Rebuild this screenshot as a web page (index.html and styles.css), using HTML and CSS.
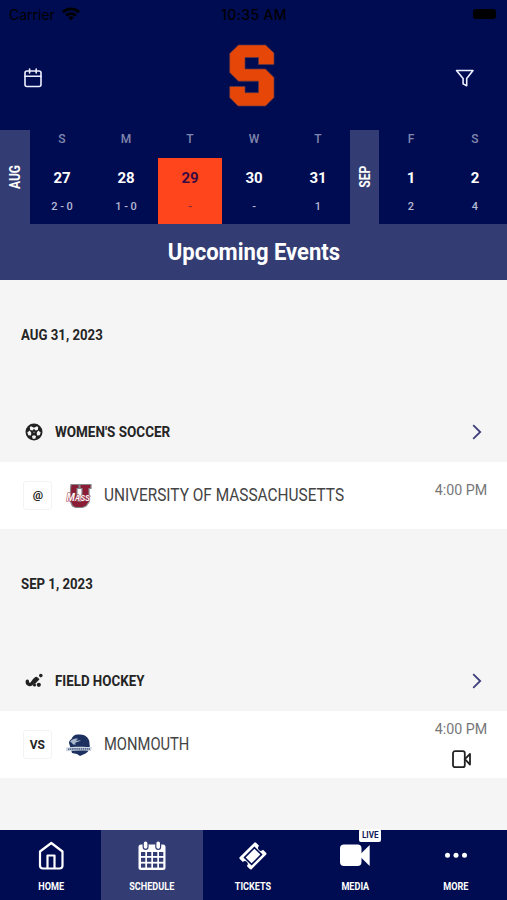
FILE: index.html
```html
<!DOCTYPE html>
<html lang="en">
<head>
<meta charset="utf-8">
<title>Upcoming Events</title>
<link rel="stylesheet" href="styles.css">
</head>
<body>
<div class="app">
  <header class="top">
    <div class="status">
      <div class="carrier"><span>Carrier</span>
        <svg width="18" height="14" viewBox="0 0 18 14"><g fill="none" stroke="#000" stroke-width="2.6"><path d="M1 5.2a11.4 11.4 0 0 1 16 0"/><path d="M4 8.6a7.2 7.2 0 0 1 10 0"/></g><path d="M9 13.6 6.2 10.6a4 4 0 0 1 5.6 0z"/></svg>
      </div>
      <div class="clock">10:35 AM</div>
      <div class="battery"><i></i></div>
    </div>
    <div class="brand">
      <svg class="cal" width="18" height="20" viewBox="0 0 18 20" fill="none" stroke="#eef0ff" stroke-width="1.6" stroke-linecap="round"><rect x="1" y="3" width="16" height="15.5" rx="2"/><path d="M1 8.2h16M5.6 1v4M12.2 1v4"/></svg>
      <svg class="logo" width="46" height="63" viewBox="0 0 46 63"><path fill="#e64608" stroke="#5c3a42" stroke-width=".7" d="M9.500 1h27l8.500 8v11.500H29.500V13.500H16V25h20.500l8.500 8.500v20L36.500 62H9L.7 53.500V42.500H16v6.200h13.500V37.200h-20L.7 28.500V9.500z"/></svg>
      <svg class="filter" width="20" height="20" viewBox="0 0 20 20" fill="none" stroke="#eef0ff" stroke-width="1.6" stroke-linejoin="round"><path d="M1.500 2.500h16.500l-6.300 8v7.200l-3.600-1.800v-5.400z"/></svg>
    </div>
    <div class="week">
      <div class="month aug"><span>AUG</span></div>
      <div class="day"><b>S</b><strong>27</strong><em>2 - 0</em></div>
      <div class="day"><b>M</b><strong>28</strong><em>1 - 0</em></div>
      <div class="day today"><b>T</b><strong>29</strong><em>-</em></div>
      <div class="day"><b>W</b><strong>30</strong><em>-</em></div>
      <div class="day"><b>T</b><strong>31</strong><em>1</em></div>
      <div class="month"><span>SEP</span></div>
      <div class="day"><b>F</b><strong>1</strong><em>2</em></div>
      <div class="day"><b>S</b><strong>2</strong><em>4</em></div>
    </div>
  </header>
  <h1><span>Upcoming Events</span></h1>
  <main>
    <h2><span>AUG 31, 2023</span></h2>
    <div class="sport">
      <svg width="18" height="18" viewBox="0 0 18 18"><circle cx="9" cy="9" r="8.500" fill="#222"/><g fill="#f5f5f5"><path d="m6 3.300 3 1.500 3-1.500 1.200 1-.4 2.600-2.300.5L9 5.700 7.500 7.400l-2.300-.5-.4-2.600z"/><path d="m2.300 9.500 2.500-2 1.500 2.200-.3 2.800-2.700-.2zM15.700 9.500l-2.500-2-1.500 2.200.3 2.800 2.700-.2zM7 13l2-.8 2 .8-.6 2.700H7.600z"/></g><circle cx="9" cy="9.200" r=".8" fill="#999"/></svg>
      <h3><span>WOMEN'S SOCCER</span></h3>
      <svg class="chev" width="10" height="16" viewBox="0 0 10 16"><path d="m1.200 1.200 7 6.800-7 6.800"/></svg>
    </div>
    <div class="game">
      <div class="where at"><span>@</span></div>
      <svg class="team" width="28" height="26" viewBox="0 0 28 26"><path d="M6 1.500h8v4h-2V16c0 2 1 2.500 2.500 2.500S17 18 17 16V5.500h-2v-4h11v4h-2V19l-3 4-3.500 1.500h-7L7.500 23 5.500 18.500v-13z" fill="#8a1c35" stroke="#85878a" stroke-width="1.200"/><text x="1.500" y="17.500" textLength="23.500" lengthAdjust="spacingAndGlyphs" class="mass"><tspan class="big">M</tspan>ASS</text></svg>
      <div class="name"><span>UNIVERSITY OF MASSACHUSETTS</span></div>
      <div class="info"><time>4:00 PM</time></div>
    </div>
    <h2><span>SEP 1, 2023</span></h2>
    <div class="sport">
      <svg width="18" height="18" viewBox="0 0 18 18"><path d="M2.300 9.300c-.3 3 3.400 4.500 5.200 1.400.9-1.600 2-3 3.800-4.200" fill="none" stroke="#222" stroke-width="3.400" stroke-linecap="round"/><path d="m9 11.500 4.800-5" stroke="#222" stroke-width="2"/><g fill="#222"><circle cx="15.800" cy="3.600" r="1.800"/><circle cx="9.500" cy="13" r="1.600"/><circle cx="13.800" cy="12.800" r="2.100"/></g></svg>
      <h3 class="fh"><span>FIELD HOCKEY</span></h3>
      <svg class="chev" width="10" height="16" viewBox="0 0 10 16"><path d="m1.200 1.200 7 6.800-7 6.800"/></svg>
    </div>
    <div class="game">
      <div class="where"><span>VS</span></div>
      <svg class="team" width="28" height="26" viewBox="0 0 28 26"><path d="M4 11c0-2 1-3 2.500-4C8 3.500 10 2 14 2.500 21 2 25 7 24.500 12c1 4-1 8-4 9.500L15 24l-3-2-5-1z" fill="#1c315f"/><path d="M5 9.500c2-2.500 5-3 8-3l-2 2.500 5-1c-3 2.500-5 2-6 3l1 1.500H8l-1-1.500z" fill="#a9b8cd"/><path d="M1 15.500c6-1 19-1 26-.3l-1 3.800c-8-.6-17-.6-25 .3z" fill="#ced7e2"/><path d="M3 17.300c6-.6 16-.6 22-.2" stroke="#53698e" stroke-width="1.800" stroke-dasharray="1.500 .6" fill="none"/></svg>
      <div class="name mon"><span>MONMOUTH</span></div>
      <div class="info video"><time>4:00 PM</time>
        <svg class="cam" width="20" height="19" viewBox="0 0 20 19" fill="none" stroke="#222" stroke-width="1.800" stroke-linejoin="round"><rect x="1" y="1.200" width="11.800" height="16" rx="2"/><path d="M12.800 9.200 18 4v10.500z"/></svg>
      </div>
    </div>
  </main>
  <nav>
    <a><svg width="28" height="30" viewBox="0 0 28 30" fill="none" stroke="#fff" stroke-width="2.200" stroke-linejoin="round"><path d="M3 10.500 14.300 2l11.200 8.500V24.500a3 3 0 0 1-3 3H6a3 3 0 0 1-3-3z"/><path d="M10.500 27V14.500h7V27"/></svg><span>HOME</span></a>
    <a class="on"><svg width="28" height="30" viewBox="0 0 28 30"><rect x=".5" y="3.500" width="27" height="25.500" rx="2.500" fill="#fff"/><g fill="#333d74"><rect x="3" y="11" width="4.300" height="4"/><rect x="9" y="11" width="4.300" height="4"/><rect x="15" y="11" width="4.300" height="4"/><rect x="21" y="11" width="4.300" height="4"/><rect x="3" y="16.800" width="4.300" height="4"/><rect x="9" y="16.800" width="4.300" height="4"/><rect x="15" y="16.800" width="4.300" height="4"/><rect x="21" y="16.800" width="4.300" height="4"/><rect x="3" y="22.600" width="4.300" height="4"/><rect x="9" y="22.600" width="4.300" height="4"/><rect x="15" y="22.600" width="4.300" height="4"/><rect x="21" y="22.600" width="4.300" height="4"/></g><g fill="#fff" stroke="#333d74" stroke-width="1.200"><rect x="5.200" y="-.2" width="4.800" height="8.500" rx="2.400"/><rect x="17.800" y="-.2" width="4.800" height="8.500" rx="2.400"/></g></svg><span>SCHEDULE</span></a>
    <a><svg width="30" height="30" viewBox="0 0 30 30"><g transform="rotate(-45 15 15)"><path fill="#fff" d="M3.500 7.500a1.500 1.500 0 0 1 1.500-1.500h20a1.500 1.500 0 0 1 1.500 1.500V12a3 3 0 0 0 0 6v4.500A1.500 1.500 0 0 1 25 24H5a1.500 1.500 0 0 1-1.500-1.500V18a3 3 0 0 0 0-6z" transform="translate(0 .8) scale(1 .94)"/><rect x="8" y="10" width="14" height="10" fill="none" stroke="#000c52" stroke-width="1.600"/></g></svg><span>TICKETS</span></a>
    <a><i class="live"><span>LIVE</span></i><svg width="30" height="30" viewBox="0 0 30 30" fill="#fff"><rect x="0" y="3.500" width="21.500" height="21.500" rx="4"/><path d="M21 12.500l8.700-8.500v21L21 16.500z"/></svg><span>MEDIA</span></a>
    <a><svg width="28" height="30" viewBox="0 0 28 30" fill="#fff"><circle cx="5.500" cy="14.200" r="2.500"/><circle cx="14" cy="14.200" r="2.500"/><circle cx="22.500" cy="14.200" r="2.500"/></svg><span>MORE</span></a>
  </nav>
</div>
</body>
</html>
```
FILE: styles.css
```css
* { box-sizing: border-box; margin: 0; padding: 0; }
body { font-family: Roboto, "Liberation Sans", sans-serif; color: #242424; }
svg { display: block; flex: none; overflow: visible; }
.app { width: 507px; height: 900px; display: flex; flex-direction: column; background: #f5f5f5; overflow: hidden; }
.top { background: #000c52; height: 224px; flex: none; display: flex; flex-direction: column; }
.status { height: 28px; display: grid; grid-template-columns: 1fr auto 1fr; align-items: center; padding: 0 11px 0 9px; color: #000; font-family: Inter, sans-serif; font-size: 14px; }
.carrier { display: flex; align-items: center; gap: 7px; }
.clock { font-weight: 500; font-size: 14px; letter-spacing: .35px; margin-left: 3px; }
.battery { justify-self: end; }
.battery i { display: block; width: 23px; height: 10px; border-radius: 3px; background: #000; }
.brand { height: 102px; display: grid; grid-template-columns: 1fr 46px 1fr; padding: 0 32px 0 24px; }
.cal { margin-top: 40px; }
.logo { margin: 16px 0 0 2px; }
.filter { margin-top: 40px; justify-self: end; }
.week { height: 94px; display: flex; }
.month { width: 29px; background: #333d74; display: flex; align-items: center; justify-content: center; color: #fff; font-weight: 700; font-size: 14px; }
.month.aug { width: 30px; }
.month span { writing-mode: vertical-rl; transform: rotate(180deg) scaleY(.86); line-height: 16px; }
.day { width: 64px; display: flex; flex-direction: column; align-items: center; color: #fff; }
.day b { height: 28px; width: 100%; background: #000c52; text-align: center; font-size: 12px; line-height: 18px; font-weight: 500; color: #8087ae; }
.day strong { font-size: 15px; line-height: 41px; font-weight: 700; }
.day em { font-style: normal; font-weight: 500; font-size: 11px; line-height: 15px; color: #b5b9d2; }
.today { background: #ff451b; }
.today strong { color: #3b0b43; }
.today em { color: #7b2440; }
h1 { height: 56px; flex: none; background: #333d74; color: #fff; font-size: 23px; line-height: 57px; text-align: center; font-weight: 700; }
h1 span { display: inline-block; transform: scaleX(.958); }
main { flex: 1; }
h2 { height: 122px; padding: 44px 21px 0; font-size: 15px; line-height: 22px; font-weight: 700; }
h2 span, h3 span, .name span { display: inline-block; transform: scaleX(.88); transform-origin: 0 50%; }
.sport { height: 60px; display: flex; align-items: center; padding: 0 25px; }
.sport h3 { flex: 1; margin-left: 12px; font-size: 15px; line-height: 20px; font-weight: 700; }
h3 span { transform: scaleX(.898); }
.chev path { fill: none; stroke: #3c3f7c; stroke-width: 1.800; }
.game { height: 67px; background: #fff; display: flex; align-items: center; padding: 0 19px 0 23px; }
.where { width: 29px; height: 29px; border: 1px solid #f3f3f3; border-radius: 3px; text-align: center; font-size: 13px; line-height: 27px; font-weight: 700; }
.where span { display: inline-block; transform: scaleX(.92); }
.where.at { font-size: 11px; font-weight: 700; }
.where.at span { transform: scaleX(1.05); }
.team { margin-left: 13px; }
.mass { font: italic 700 8.500px "Liberation Sans", sans-serif; fill: #fff; stroke: #9c3348; stroke-width: 1.200px; paint-order: stroke; }
.big { font-size: 11.500px; }
.name { flex: 1; margin: -2px 0 0 11px; font-size: 17.500px; line-height: 22px; color: #444; white-space: nowrap; }
.name span { transform: scaleX(.88); }
.name.mon span { transform: scaleX(.842); }
.fh span { transform: scaleX(.888); }
.info { align-self: stretch; display: flex; flex-direction: column; align-items: flex-end; padding: 18px 1px 0 0; }
.info.video { padding-top: 8px; }
.info time { font-size: 15px; line-height: 20px; color: #777; transform: scaleX(.95); transform-origin: 100% 50%; }
.cam { margin: 11px 15px 0 0; }
nav { height: 70px; flex: none; background: #000c52; display: grid; grid-template-columns: repeat(5, 1fr); }
nav a { position: relative; display: flex; flex-direction: column; align-items: center; padding-top: 11px; color: #fff; font-size: 10px; font-weight: 700; }
nav a > span { line-height: 12px; margin-top: 10px; transform: scaleX(.91); }
nav .on { background: #333d74; }
.live { position: absolute; top: -1px; left: 55px; width: 22px; height: 13px; background: #fff; color: #10195b; border-radius: 2px; font: 700 9px/13px Roboto, sans-serif; text-align: center; }
.live span { display: inline-block; transform: scaleX(.9); }
```
